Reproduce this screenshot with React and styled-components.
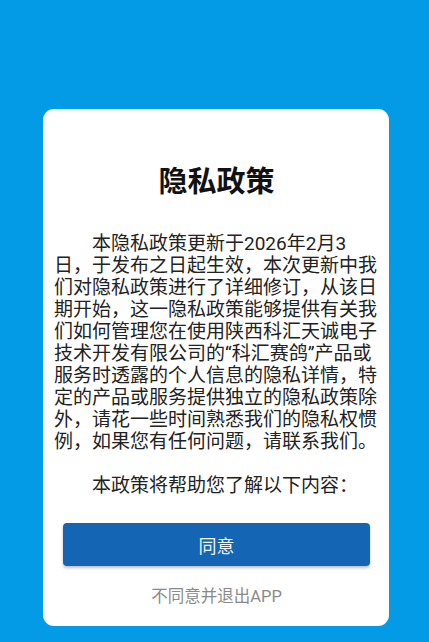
import React from "react";
import styled, { createGlobalStyle } from "styled-components";

const Global = createGlobalStyle`
  html, body { margin: 0; padding: 0; }
  body {
    background: #049be6;
    font-family: Roboto, "Noto Sans CJK SC", sans-serif;
  }
  #root { min-height: 642px; }
`;

const Screen = styled.div`
  width: 429px;
  height: 642px;
  background: #049be6;
  display: flex;
  justify-content: flex-start;
  align-items: flex-start;
  padding: 109px 0 0 43px;
  box-sizing: border-box;
`;

const Card = styled.div`
  width: 346px;
  height: 517px;
  background: #ffffff;
  border-radius: 11px;
  box-sizing: border-box;
  padding: 55px 10px 0 11px;
  display: flex;
  flex-direction: column;
  align-items: center;
`;

const Title = styled.h1`
  margin: 0;
  font-size: 29px;
  line-height: 36px;
  font-weight: 700;
  color: #111;
`;

const Body = styled.p`
  margin: 33px 0 0;
  align-self: stretch;
  font-size: 19px;
  line-height: 22px;
  color: #222;
  white-space: pre-wrap;
  text-align: left;
`;

const AgreeButton = styled.button`
  margin-top: 26px;
  width: 307px;
  height: 43px;
  border: none;
  border-radius: 4px;
  background: #1565b5;
  color: #eef3f9;
  font-family: Roboto, "Noto Sans CJK SC", sans-serif;
  font-size: 18px;
  box-shadow: 0 2px 3px rgba(0, 0, 0, 0.25);
  cursor: pointer;
`;

const Decline = styled.div`
  margin-top: 20px;
  font-size: 16.5px;
  line-height: 21px;
  color: #8a8a8a;
`;

const text =
  "\u3000\u3000本隐私政策更新于2026年2月3日，于发布之日起生效，本次更新中我们对隐私政策进行了详细修订，从该日期开始，这一隐私政策能够提供有关我们如何管理您在使用陕西科汇天诚电子技术开发有限公司的“科汇赛鸽”产品或服务时透露的个人信息的隐私详情，特定的产品或服务提供独立的隐私政策除外，请花一些时间熟悉我们的隐私权惯例，如果您有任何问题，请联系我们。\n\n\u3000\u3000本政策将帮助您了解以下内容：";

export default function App() {
  return (
    <>
      <Global />
      <Screen>
        <Card>
          <Title>隐私政策</Title>
          <Body>{text}</Body>
          <AgreeButton>同意</AgreeButton>
          <Decline>不同意并退出APP</Decline>
        </Card>
      </Screen>
    </>
  );
}
